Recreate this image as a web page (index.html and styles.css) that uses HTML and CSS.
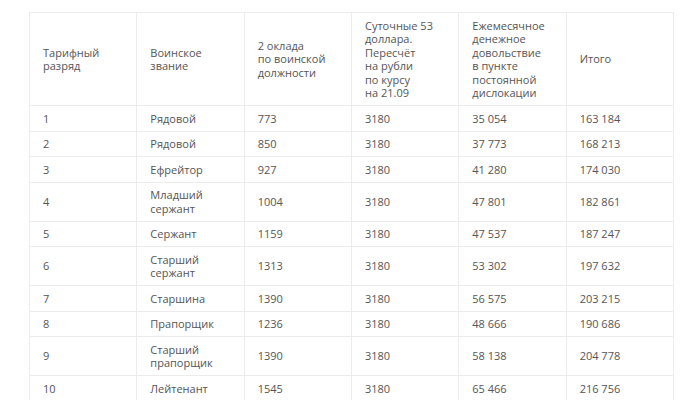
FILE: index.html
```html
<!DOCTYPE html>
<html lang="ru">
<head>
<meta charset="utf-8">
<link rel="stylesheet" href="styles.css">
</head>
<body>
<table class="pay">
  <thead>
    <tr>
      <th>Тарифный<br>разряд</th>
      <th>Воинское<br>звание</th>
      <th>2 оклада<br>по воинской<br>должности</th>
      <th>Суточные 53<br>доллара.<br>Пересчёт<br>на рубли<br>по курсу<br>на 21.09</th>
      <th>Ежемесячное<br>денежное<br>довольствие<br>в пункте<br>постоянной<br>дислокации</th>
      <th>Итого</th>
    </tr>
  </thead>
  <tbody>
    <tr><td>1</td><td>Рядовой</td><td>773</td><td>3180</td><td>35 054</td><td>163 184</td></tr>
    <tr><td>2</td><td>Рядовой</td><td>850</td><td>3180</td><td>37 773</td><td>168 213</td></tr>
    <tr><td>3</td><td>Ефрейтор</td><td>927</td><td>3180</td><td>41 280</td><td>174 030</td></tr>
    <tr><td>4</td><td>Младший<br>сержант</td><td>1004</td><td>3180</td><td>47 801</td><td>182 861</td></tr>
    <tr><td>5</td><td>Сержант</td><td>1159</td><td>3180</td><td>47 537</td><td>187 247</td></tr>
    <tr><td>6</td><td>Старший<br>сержант</td><td>1313</td><td>3180</td><td>53 302</td><td>197 632</td></tr>
    <tr><td>7</td><td>Старшина</td><td>1390</td><td>3180</td><td>56 575</td><td>203 215</td></tr>
    <tr><td>8</td><td>Прапорщик</td><td>1236</td><td>3180</td><td>48 666</td><td>190 686</td></tr>
    <tr><td>9</td><td>Старший<br>прапорщик</td><td>1390</td><td>3180</td><td>58 138</td><td>204 778</td></tr>
    <tr><td>10</td><td>Лейтенант</td><td>1545</td><td>3180</td><td>65 466</td><td>216 756</td></tr>
  </tbody>
</table>
</body>
</html>
```

FILE: styles.css
```css
html, body {
  margin: 0;
  padding: 0;
  background: #ffffff;
}

body {
  padding: 12px 0 0 29px;
  font-family: "Open Sans", "Noto Sans", sans-serif;
  font-size: 11px;
  color: #555555;
}

.pay {
  border-collapse: collapse;
  table-layout: fixed;
  width: 645px;
}

.pay th,
.pay td {
  border: 1px solid #ececec;
  padding: 5.5px 13px;
  line-height: 13.5px;
  text-align: left;
  vertical-align: middle;
  font-weight: normal;
}
```
